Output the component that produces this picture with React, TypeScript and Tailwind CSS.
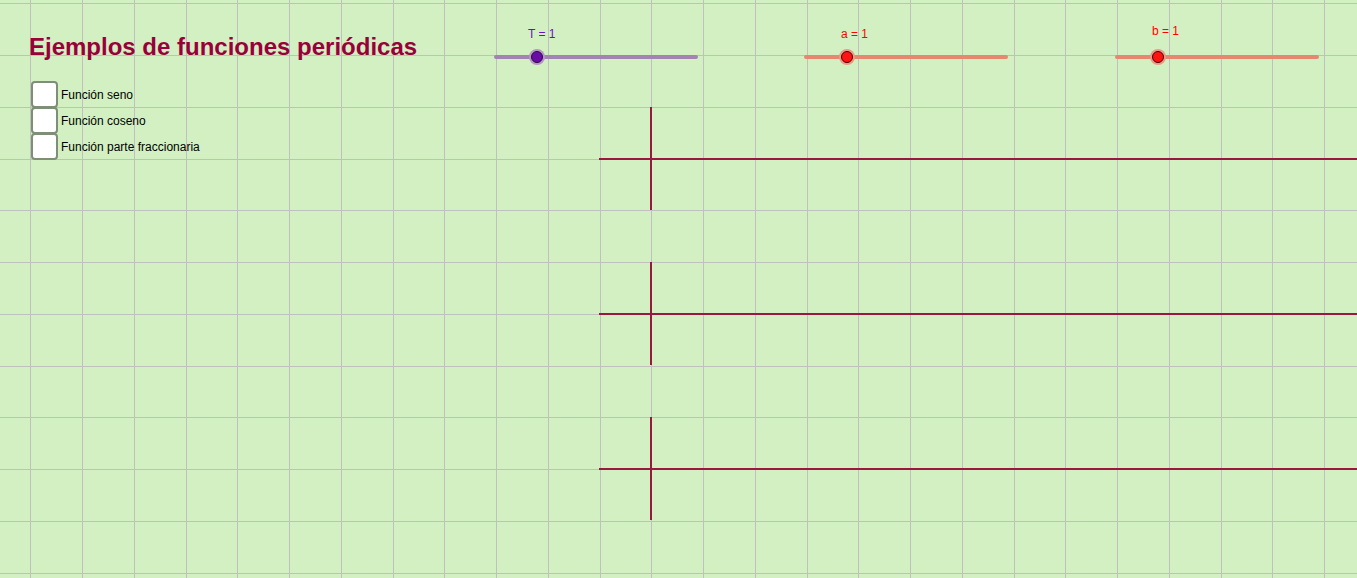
import React from 'react'

const GRID = 51.75
const font = { fontFamily: '"Liberation Sans", Arial, sans-serif' }

function Grid() {
  const xs = Array.from({ length: 27 }, (_, k) => Math.round(30.3 + GRID * k) + 0.5)
  const ys = Array.from({ length: 12 }, (_, k) => Math.round(3.3 + GRID * k) + 0.5)
  const rows = [159, 314, 469]
  return (
    <svg className="absolute inset-0" width="1357" height="578">
      {xs.map((x) => (
        <line key={'x' + x} x1={x} y1={0} x2={x} y2={578} stroke="#c0c0c0" strokeWidth={1} />
      ))}
      {ys.map((y) => (
        <line key={'y' + y} x1={0} y1={y} x2={1357} y2={y} stroke="#c0c0c0" strokeWidth={1} />
      ))}
      {rows.map((y) => (
        <g key={y} stroke="#99183f" strokeWidth={2}>
          <line x1={599} y1={y} x2={1357} y2={y} />
          <line x1={651} y1={y - 52} x2={651} y2={y + 51} />
        </g>
      ))}
    </svg>
  )
}

function Slider({ label, purple, lift = false }: { label: string; purple?: boolean; lift?: boolean }) {
  const track = purple ? 'bg-[#a283b4]' : 'bg-[#e8876f]'
  const halo = purple ? 'bg-[#b596c4]' : 'bg-[#eb9a88]'
  const knob = purple ? 'bg-[#6a0da8] border-[#2a0a3a]' : 'bg-[#ff1414] border-[#4a0000]'
  const text = purple ? 'text-[#6a10c8] pl-[34px]' : 'text-[#ff0000] pl-[37px]'
  return (
    <div className="w-[204px]">
      <div className={`h-[14px] text-[12px] leading-[14px] ${text} ${lift ? 'mt-[24px] mb-[17px]' : 'mt-[27px] mb-[14px]'}`} style={font}>
        {label}
      </div>
      <div className={`relative h-[4px] rounded-full ${track}`}>
        <div className={`absolute left-[35px] top-[-6px] w-[16px] h-[16px] rounded-full ${halo} flex items-center justify-center`}>
          <div className={`w-[12px] h-[12px] rounded-full border ${knob}`} />
        </div>
      </div>
    </div>
  )
}

function Check({ label }: { label: string }) {
  return (
    <div className="flex items-center h-[26px]">
      <div className="w-[27px] h-[27px] -my-[0.5px] bg-white border-2 border-[#7f8e76] rounded-[4px] shrink-0" />
      <span className="ml-[3px] mt-[1px] text-[12px] text-black" style={font}>{label}</span>
    </div>
  )
}

export default function App() {
  return (
    <div className="relative w-[1357px] h-[578px] overflow-hidden bg-[#d2f0c1]">
      <Grid />
      <div className="relative flex">
        <div className="w-[494px] pl-[30px] pt-[35px]">
          <h1 className="text-[24px] leading-[24px] font-bold text-[#99003a] -ml-[1px]" style={font}>
            Ejemplos de funciones periódicas
          </h1>
          <div className="mt-[22px] pl-[1px] flex flex-col">
            <Check label="Función seno" />
            <Check label="Función coseno" />
            <Check label="Función parte fraccionaria" />
          </div>
        </div>
        <div className="flex gap-[106px]">
          <Slider label="T = 1" purple />
          <Slider label="a = 1" />
          <div className="ml-[1px]"><Slider label="b = 1" lift /></div>
        </div>
      </div>
    </div>
  )
}
